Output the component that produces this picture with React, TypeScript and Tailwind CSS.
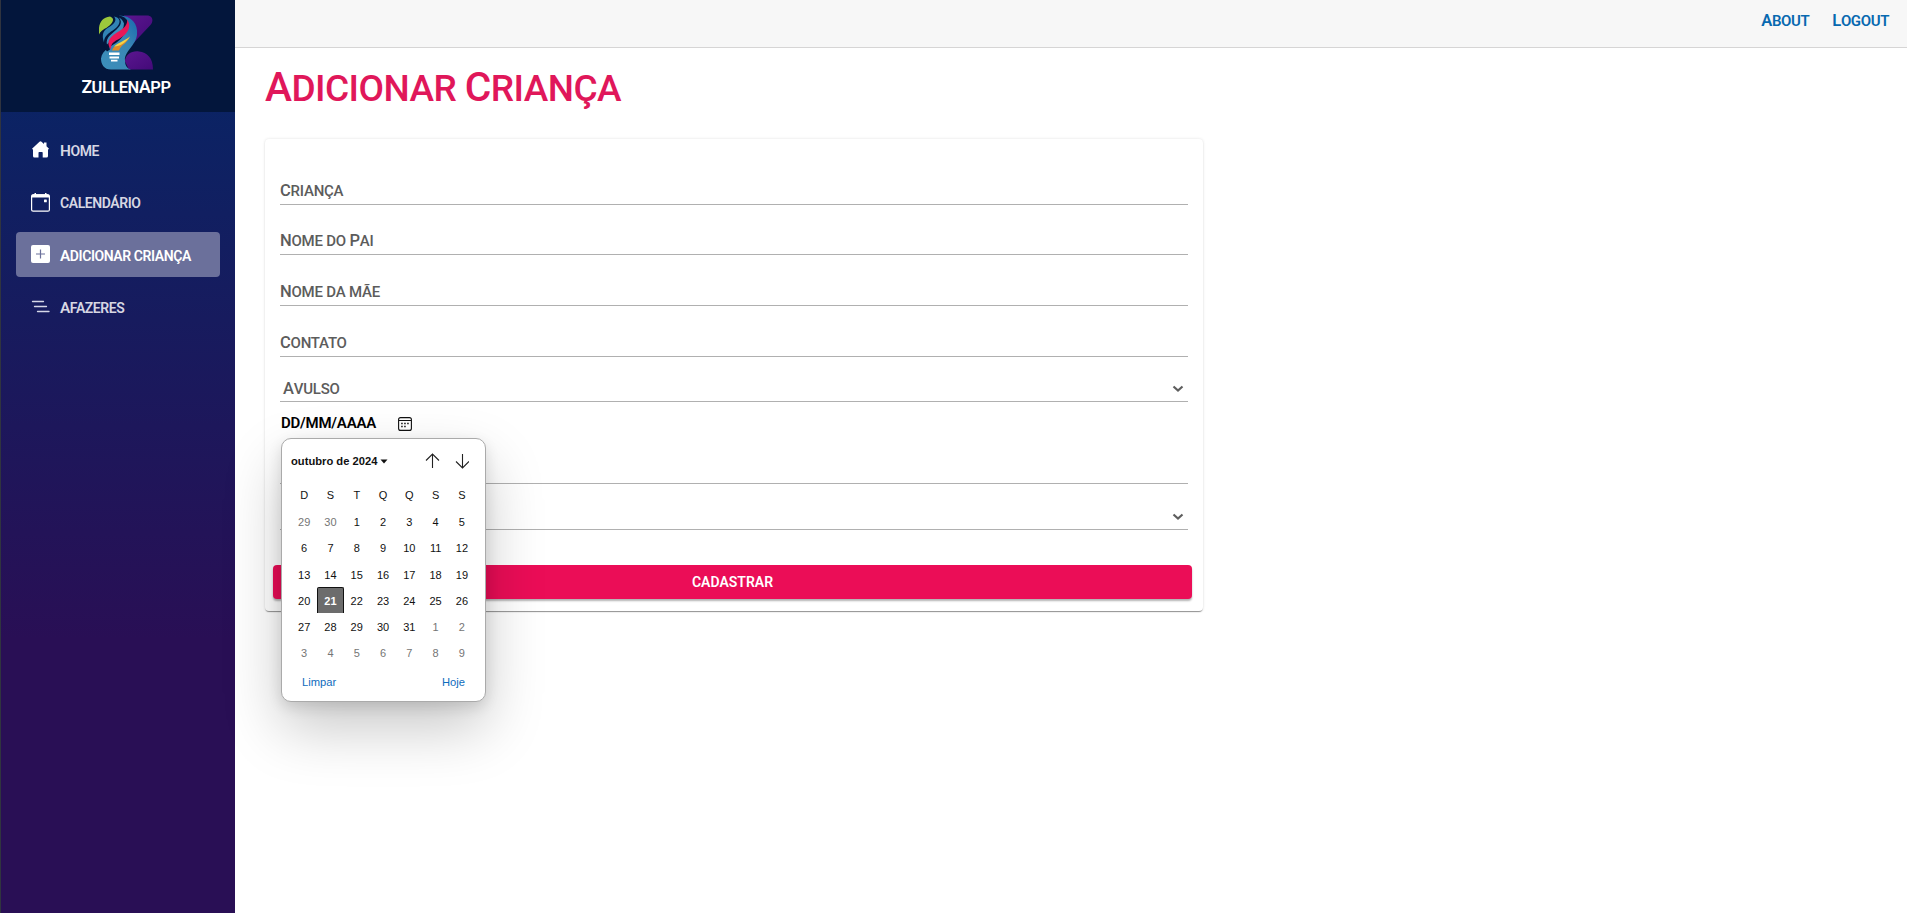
import React from "react";

function Caps({ text }: { text: string }) {
  return (
    <>
      {text.split(" ").map((word, i) => (
        <React.Fragment key={i}>
          {i > 0 && " "}
          <span
            className={
              /^[A-Z][a-z]/.test(word)
                ? "inline-block uppercase first-letter:text-[1.1em]"
                : "inline-block uppercase"
            }
          >
            {word}
          </span>
        </React.Fragment>
      ))}
    </>
  );
}

function Logo() {
  return (
    <svg viewBox="0 0 54 54" className="h-[55px] w-[54px]" aria-hidden="true">
      <defs>
        <linearGradient id="violet" x1="0" y1="0" x2="1" y2="1">
          <stop offset="0" stopColor="#5b1690" />
          <stop offset="1" stopColor="#430a78" />
        </linearGradient>
        <linearGradient id="sky" x1="0" y1="1" x2="1" y2="0">
          <stop offset="0" stopColor="#3c8fbb" />
          <stop offset=".6" stopColor="#3a86b4" />
          <stop offset="1" stopColor="#1668ae" />
        </linearGradient>
      </defs>
      <path d="M25 0H48C54 0 55 6 51 10L34 28Z" fill="url(#violet)" />
      <path d="M26 46C26 39 33 35 40 36C48 37 54 42 54 54H30Z" fill="url(#violet)" />
      <path d="M20 0C33 0 39 9 38 19C37 30 25 36 26 45C26 50 28 53 32 54H12C5 54 2 49 2 43C3 34 13 31 20 25C28 18 31 8 20 0Z" fill="url(#sky)" />
      <path d="M20 0C32 2 32 14 22 21C13 27 9 30 11 34L8 36C2 29 6 22 10 18Z" fill="#04163c" />
      <path d="M11 1C17 3 13 9 8 12C4 14 1 16 0 19C-1 9 2 2 11 1Z" fill="#9cc83c" />
      <path d="M15 1C25 3 20 12 12 16C8 19 5 22 5 27C2 18 5 14 11 11C16 8 18 4 15 1Z" fill="#3183b5" />
      <path d="M20 2C25 8 19 13 13 18C9 21 7 25 8 29C14 22 25 18 25 8C24 5 22 3 20 2Z" fill="#3b8fbd" />
      <path d="M28 4C34 12 27 20 19 24C13 27 12 29 12 34C6 26 12 21 18 17C25 13 29 9 28 4Z" fill="#e91858" />
      <path d="M31 21C28 28 22 29 20 35H13C15 28 24 29 31 21Z" fill="#e08a28" />
      <path d="M31 21C25 26 19 27 15 31C21 31 27 27 31 21Z" fill="#f6d547" />
      <path d="M10 37H20.500V39.600H10ZM10.500 41H20V43H10.500ZM12 44.200H18.500V46H12Z" fill="#fff" />
    </svg>
  );
}

function HouseIcon() {
  return (
    <svg viewBox="0 0 17 17" className="ml-px h-[17px] w-[17px] fill-white" aria-hidden="true">
      <path d="M8.500 0.300Q9 0.300 9.500 .8L12 3V1.500H14.500V5.200L17 7.700L16.300 8.600L16 8.300V15Q16 16.500 14.500 16.500H10.700V11.800Q10.700 11 10 11H7.200Q6.500 11 6.500 11.800V16.500H2.500Q1 16.500 1 15V8.300L.6 8.600L0 7.700L7.500 .8Q8 .3 8.500 .3Z" />
    </svg>
  );
}

function DateIcon() {
  return (
    <svg viewBox="0 0 19 19" className="h-[19px] w-[19px]" aria-hidden="true">
      <rect x=".6" y="1.800" width="17.800" height="16.400" rx="1.500" fill="none" stroke="#fff" strokeWidth="1.200" />
      <path d="M.5 4.500V3.200Q.5 1.200 2.500 1.200H3.500V0H5V1.200H14V0H15.500V1.200H16.500Q18.500 1.200 18.500 3.200V4.500Z" fill="#fff" />
      <rect x="13" y="6.500" width="2.800" height="2.800" rx=".5" fill="#fff" />
    </svg>
  );
}

function PlusIcon() {
  return (
    <svg viewBox="0 0 19 18" className="-mt-px h-[18px] w-[19px]" aria-hidden="true">
      <rect width="19" height="18" rx="2" fill="#fff" />
      <path d="M9.500 4.500V13.500M5 9H14" stroke="#6b709b" strokeWidth="1.200" />
    </svg>
  );
}

function ListIcon() {
  return (
    <svg viewBox="0 0 19 13" className="-mt-0.5 h-[13px] w-[19px]" aria-hidden="true">
      <path d="M1.500 1.500H12.500M3.500 6.500H15.500M6.500 11.500H18" stroke="#d6d8e8" strokeWidth="1.300" strokeLinecap="round" />
    </svg>
  );
}

const menu = [
  { label: "Home", icon: <HouseIcon /> },
  { label: "calendário", icon: <DateIcon /> },
  { label: "Adicionar criança", icon: <PlusIcon />, active: true },
  { label: "Afazeres", icon: <ListIcon /> },
];

function Sidebar() {
  return (
    <aside className="flex h-full w-[235px] shrink-0 flex-col border-l border-[#30343f] bg-[linear-gradient(180deg,rgb(5,39,103)_0%,#290f55_70%)]">
      <div className="flex h-28 flex-col items-center bg-[#03163c] pt-[15px] pl-4">
        <Logo />
        <div className="mt-[5px] text-[16.500px] leading-6 font-semibold tracking-[-0.03em] text-white">
          <span className="inline-block uppercase first-letter:text-[1.06em]">Zullen</span>
          <span className="inline-block uppercase first-letter:text-[1.1em]">App</span>
        </div>
      </div>
      <nav className="flex flex-col gap-[7.500px] px-[15px] pt-[15px]">
        {menu.map((item) => (
          <a
            key={item.label}
            className={
              item.active
                ? "flex h-[45px] items-center rounded bg-[#6b709b] pl-[15px] text-white"
                : "flex h-[45px] items-center rounded pl-[15px] text-[#d7d7e3]"
            }
          >
            <span className="flex w-[29px] items-center">{item.icon}</span>
            <span className="pt-0.5 text-[14px] leading-5 font-semibold tracking-[-0.03em]">
              <Caps text={item.label} />
            </span>
          </a>
        ))}
      </nav>
    </aside>
  );
}

function Chevron() {
  return (
    <svg viewBox="0 0 12 8" className="h-2 w-3" aria-hidden="true">
      <path d="M1.500 1.500L6 5.500L10.500 1.500" fill="none" stroke="#5e5e5e" strokeWidth="2.200" />
    </svg>
  );
}

function Field({ label, size, select }: { label: string; size: string; select?: boolean }) {
  return (
    <div className={"flex items-end justify-between border-b border-[#b0b0b0] text-[15px] leading-6 font-medium tracking-[-0.015em] text-[#5c5c5c] " + size}>
      <span className={select ? "pl-[3px]" : "pb-px"}>
        <Caps text={label} />
      </span>
      {select && (
        <span className="pr-1 pb-2">
          <Chevron />
        </span>
      )}
    </div>
  );
}

const weekdays = ["D", "S", "T", "Q", "Q", "S", "S"];
const days = [29, 30, ...Array.from({ length: 31 }, (_, i) => i + 1), ...Array.from({ length: 9 }, (_, i) => i + 1)];

function DatePopup() {
  return (
    <div className="absolute top-[299px] left-4 h-[264px] w-[205px] rounded-[10px] border border-[#aaa] bg-white px-[9px] font-['Liberation_Sans',sans-serif] text-[11px] text-[#111] shadow-[0_26px_58px_rgba(0,0,0,0.22),0_5px_14px_rgba(0,0,0,0.12)]">
      <div className="flex h-[45px] items-center">
        <span className="text-[11.200px] font-bold whitespace-nowrap">outubro de 2024</span>
        <svg viewBox="0 0 8 5" className="ml-[3px] h-[5px] w-2" aria-hidden="true">
          <path d="M.5 .5H7.500L4 4.500Z" fill="#111" />
        </svg>
        <svg viewBox="0 0 44 16" className="-mt-px mr-[7px] ml-auto h-4 w-11" fill="none" stroke="#222" strokeWidth="1.100" aria-hidden="true">
          <path d="M7.500 15V1M1 7.500L7.500 1L14 7.500M37.500 1V15M31 8.500L37.500 15L44 8.500" />
        </svg>
      </div>
      <div className="grid grid-cols-[repeat(7,26.300px)] text-center">
        {weekdays.map((d, i) => (
          <span key={i} className="h-[26px] leading-[23px]">
            {d}
          </span>
        ))}
        {days.map((d, i) => {
          const outside = i < 2 || i > 32;
          return (
            <span
              key={i}
              className={
                i === 22
                  ? "-mt-0.5 h-[26.300px] rounded-t-[2px] border border-b-0 border-[#111] bg-[#6c6c6c] leading-[27px] font-bold text-white"
                  : outside
                    ? "h-[26.300px] leading-[25px] text-[#757575]"
                    : "h-[26.300px] leading-[25px]"
              }
            >
              {d}
            </span>
          );
        })}
      </div>
      <div className="mt-0.5 flex justify-between pr-[11px] pl-[11px] text-[11.200px] leading-6 text-[#0e6cbd]">
        <span>Limpar</span>
        <span>Hoje</span>
      </div>
    </div>
  );
}

function CalendarIcon() {
  return (
    <svg viewBox="0 0 14 14" className="h-3.5 w-3.5" aria-hidden="true">
      <rect x=".6" y=".6" width="12.800" height="12.800" rx="2" fill="none" stroke="#111" strokeWidth="1.100" />
      <path d="M1 3.500H13" stroke="#111" strokeWidth="1" />
      <path d="M3.200 6.500H4.700M6.200 6.500H7.700M9.200 6.500H10.700M3.200 9.500H4.700M6.200 9.500H7.700" stroke="#111" strokeWidth="1.500" />
    </svg>
  );
}

export default function App() {
  return (
    <div className="flex h-[913px] w-full overflow-hidden bg-white font-[Roboto,sans-serif]">
      <Sidebar />
      <div className="flex min-w-0 flex-1 flex-col">
        <header className="flex h-12 shrink-0 items-start justify-end gap-[23px] border-b border-[#d6d5d5] bg-[#f7f7f7] pt-[9px] pr-[18px] text-[15px] leading-6 font-semibold tracking-[-0.025em] text-[#0769b0]">
          <a><Caps text="About" /></a>
          <a><Caps text="Logout" /></a>
        </header>
        <main className="pl-[30px]">
          <h1 className="mt-3.5 h-[77px] text-[37px] leading-[50px] font-medium tracking-[-0.015em] whitespace-nowrap text-[#e0175a]">
            <Caps text="Adicionar Criança" />
          </h1>
          <section className="relative h-[472px] w-[938px] rounded bg-white px-[15px] pt-[15px] shadow-[0_2px_1px_-1px_rgba(0,0,0,0.3),0_1px_1px_rgba(0,0,0,0.14),0_0_3px_rgba(0,0,0,0.12)]">
            <Field label="Criança" size="h-[51px]" />
            <Field label="Nome do Pai" size="h-[50px]" />
            <Field label="Nome da Mãe" size="h-[51px]" />
            <Field label="Contato" size="h-[51px]" />
            <Field label="Avulso" size="h-[45px]" select />
            <div className="flex h-[43px] items-center pl-px text-[15px] font-semibold text-black">
              <span className="w-[117px] tracking-[-0.015em]"><Caps text="dd/mm/aaaa" /></span>
              <CalendarIcon />
            </div>
            <Field label="" size="h-[39px]" />
            <Field label="" size="h-[46px]" select />
            <button className="mt-[35px] -ml-[7px] flex h-[34px] w-[919px] items-center justify-center rounded bg-[#eb0d57] pt-px text-[14px] font-semibold text-white shadow-[0_2px_2px_rgba(0,0,0,0.3)]">
              <Caps text="cadastrar" />
            </button>
            <DatePopup />
          </section>
        </main>
      </div>
    </div>
  );
}
